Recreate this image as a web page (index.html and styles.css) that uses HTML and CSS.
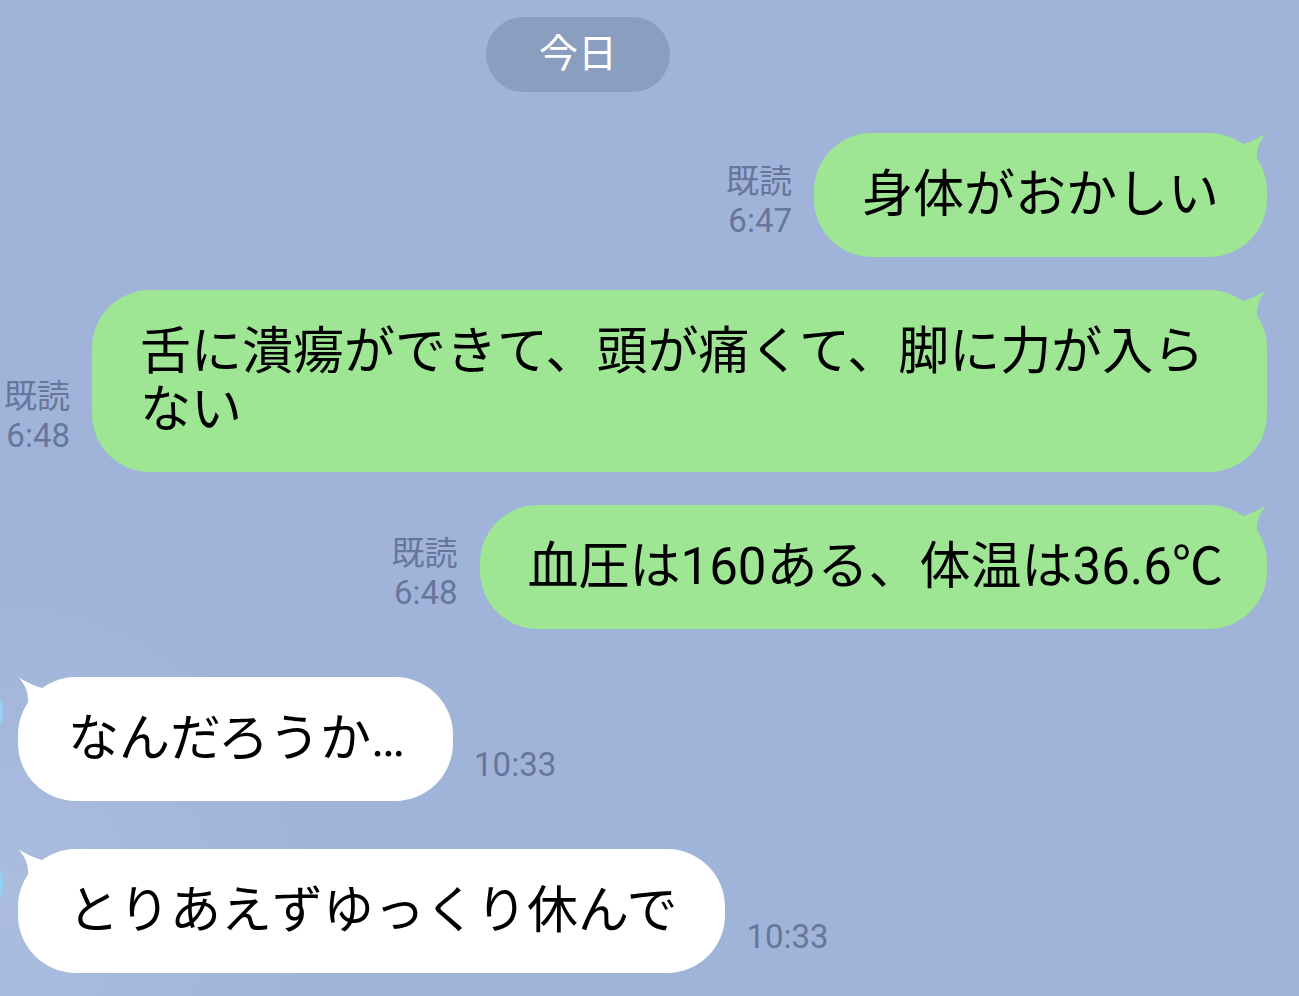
FILE: index.html
```html
<!DOCTYPE html>
<html lang="ja">
<head>
  <meta charset="UTF-8" />
  <meta name="viewport" content="width=device-width, initial-scale=1.0"/>
  <title>トーク</title>
  <link rel="stylesheet" href="styles.css">
</head>
<body>
  <div class="chat">
    <div class="date">今日</div>

    <div class="row sent first">
      <div class="meta">既読<br>6:47</div>
      <div class="bubble">
        <svg class="tail" viewBox="0 0 40 40"><path d="M8,14 C18,10 30,7 39.5,0 C33,8 29,15 30,28 L16,30 Z"/></svg>
        身体がおかしい
      </div>
    </div>

    <div class="row sent">
      <div class="meta">既読<br>6:48</div>
      <div class="bubble">
        <svg class="tail" viewBox="0 0 40 40"><path d="M8,14 C18,10 30,7 39.5,0 C33,8 29,15 30,28 L16,30 Z"/></svg>
        舌に潰瘍ができて、頭が痛くて、脚に力が入らない
      </div>
    </div>

    <div class="row sent">
      <div class="meta">既読<br>6:48</div>
      <div class="bubble">
        <svg class="tail" viewBox="0 0 40 40"><path d="M8,14 C18,10 30,7 39.5,0 C33,8 29,15 30,28 L16,30 Z"/></svg>
        血圧は160ある、体温は36.6<span class="unit">℃</span>
      </div>
    </div>

    <div class="row received">
      <div class="avatar"></div>
      <div class="bubble">
        <svg class="tail" viewBox="0 0 40 40"><path d="M8,14 C18,10 30,7 39.5,0 C33,8 29,15 30,28 L16,30 Z"/></svg>
        なんだろうか…
      </div>
      <div class="time">10:33</div>
    </div>

    <div class="row received">
      <div class="avatar"></div>
      <div class="bubble">
        <svg class="tail" viewBox="0 0 40 40"><path d="M8,14 C18,10 30,7 39.5,0 C33,8 29,15 30,28 L16,30 Z"/></svg>
        とりあえずゆっくり休んで
      </div>
      <div class="time">10:33</div>
    </div>
  </div>
</body>
</html>
```

FILE: styles.css
```css
:root {
  --bg: #a0b4da;
  --pill: #8a9ec0;
  --green: #9ee594;
  --white: #ffffff;
  --meta: #67769a;
  --avatar: #8fd3f6;
}

* {
  box-sizing: border-box;
}

html, body {
  height: 100%;
}

body {
  margin: 0;
  overflow: hidden;
  background-color: var(--bg);
  background-image: radial-gradient(circle at 0 900px, rgba(255, 255, 255, 0.12), rgba(255, 255, 255, 0) 320px);
  font-family: Roboto, "Noto Sans CJK JP", sans-serif;
  color: #000;
}

.chat {
  display: flex;
  flex-direction: column;
  padding: 17px 32px 0 4px;
}

.date {
  align-self: flex-start;
  margin-left: 482px;
  height: 75px;
  padding: 0 53px;
  border-radius: 38px;
  background-color: var(--pill);
  color: #fff;
  font-size: 39px;
  line-height: 75px;
}

.row {
  display: flex;
  align-items: flex-end;
  gap: 22px;
  margin-top: 33px;
}

.row.first {
  margin-top: 41px;
}

.row.sent {
  justify-content: flex-end;
}

.row.received {
  margin-top: 48px;
  gap: 21px;
}

.bubble {
  position: relative;
  padding: 33px 48px;
  border-radius: 58px;
  font-size: 51px;
  line-height: 58px;
  color: #000;
}

.unit {
  font-family: "Noto Sans CJK JP", sans-serif;
  letter-spacing: -4px;
  line-height: 0;
}

.sent .bubble {
  background-color: var(--green);
  fill: var(--green);
}

.received .bubble {
  background-color: var(--white);
  fill: var(--white);
  padding: 33px 48px 33px 50px;
}

.tail {
  position: absolute;
  top: 0;
  right: 0;
  width: 40px;
  height: 40px;
}

.received .tail {
  right: auto;
  left: 0;
  transform: scaleX(-1);
}

.meta,
.time {
  flex-shrink: 0;
  font-size: 33px;
  line-height: 39px;
  color: var(--meta);
  margin-bottom: 17px;
}

.meta {
  text-align: right;
}

.avatar {
  flex-shrink: 0;
  align-self: flex-start;
  width: 70px;
  height: 70px;
  margin-left: -71px;
  margin-right: -6px;
  border-radius: 50%;
  background-color: var(--avatar);
}
```
